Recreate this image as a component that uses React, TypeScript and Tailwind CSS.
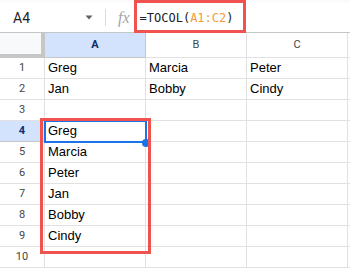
import React from 'react';

const rows: string[][] = [
  ['Greg', 'Marcia', 'Peter'],
  ['Jan', 'Bobby', 'Cindy'],
  ['', '', ''],
  ['Greg', '', ''],
  ['Marcia', '', ''],
  ['Peter', '', ''],
  ['Jan', '', ''],
  ['Bobby', '', ''],
  ['Cindy', '', ''],
  ['', '', ''],
];

const cellFont = { fontFamily: '"Liberation Sans", Arial, sans-serif' };
const uiFont = { fontFamily: 'Roboto, "Liberation Sans", sans-serif' };

export default function App() {
  return (
    <div className="relative w-[350px] h-[270px] overflow-hidden bg-white" style={uiFont}>
      {/* toolbar strip */}
      <div className="h-[3px] bg-[#f9fbfd]" />

      {/* formula bar */}
      <div className="flex items-center h-[30px] border-b border-[#c4c7c5] bg-white">
        <div className="flex items-center w-[105px] pl-[13px] pr-[12px]">
          <span className="text-[14px] text-[#1f1f1f] leading-none">A4</span>
          <svg className="ml-auto" width="8" height="5" viewBox="0 0 8 5">
            <path d="M0.5 0.5 L7.5 0.5 L4 4.5 Z" fill="#5f6368" />
          </svg>
        </div>
        <div className="w-px h-[17px] bg-[#dadce0]" />
        <span
          className="ml-[12px] text-[16px] italic text-[#a0a4a8] leading-none"
          style={{ fontFamily: '"Liberation Serif", serif' }}
        >
          fx
        </span>
        <span
          className="ml-[10px] text-[12px] text-[#202124] leading-none"
          style={{ fontFamily: '"DejaVu Sans Mono", monospace' }}
        >
          =TOCOL(<span className="text-[#f29b3a]">A1:C2</span>)
        </span>
      </div>

      {/* column headers */}
      <div className="flex h-[25px]">
        <div className="w-[45px] shrink-0 bg-[#f8f9fa] border-r-4 border-b-4 border-[#c4c7c5]" />
        <div className="w-[101px] shrink-0 flex items-center justify-center bg-[#d3e3fd] border-r border-b border-[#c4c7c5] text-[11px] font-bold text-[#0b2e6e]">
          A
        </div>
        <div className="w-[101px] shrink-0 flex items-center justify-center border-r border-b border-[#e1e1e1] text-[11px] text-[#444746]">
          B
        </div>
        <div className="w-[101px] shrink-0 flex items-center justify-center border-r border-b border-[#e1e1e1] text-[11px] text-[#444746]">
          C
        </div>
        <div className="flex-1 border-b border-[#e1e1e1]" />
      </div>

      {/* rows */}
      {rows.map((row, i) => {
        const active = i === 3;
        return (
          <div key={i} className="flex h-[21px]">
            <div
              className={
                active
                  ? 'w-[45px] shrink-0 flex items-center justify-center bg-[#d3e3fd] border-r border-b border-[#c4c7c5] text-[11px] font-bold text-[#0b2e6e]'
                  : 'w-[45px] shrink-0 flex items-center justify-center border-r border-b border-[#e1e1e1] text-[11px] text-[#444746]'
              }
            >
              {i + 1}
            </div>
            {row.map((v, j) => (
              <div
                key={j}
                className="w-[101px] shrink-0 flex items-center px-[3px] border-r border-b border-[#e1e1e1] text-[13px] text-black"
                style={cellFont}
              >
                {v}
              </div>
            ))}
            <div className="flex-1 border-b border-[#e1e1e1]" />
          </div>
        );
      })}

      {/* selected cell A4 */}
      <div className="absolute left-[44px] top-[120px] w-[103px] h-[23px] border-2 border-[#1a73e8]" />
      <div className="absolute left-[142px] top-[139px] w-[8px] h-[8px] rounded-full bg-[#1a73e8]" />

      {/* callout boxes */}
      <div className="absolute left-[134px] top-0 w-[112px] h-[33px] border-[3px] border-[#f0524f]" />
      <div className="absolute left-[40px] top-[118px] w-[111px] h-[136px] border-[3px] border-[#f0524f]" />
    </div>
  );
}
